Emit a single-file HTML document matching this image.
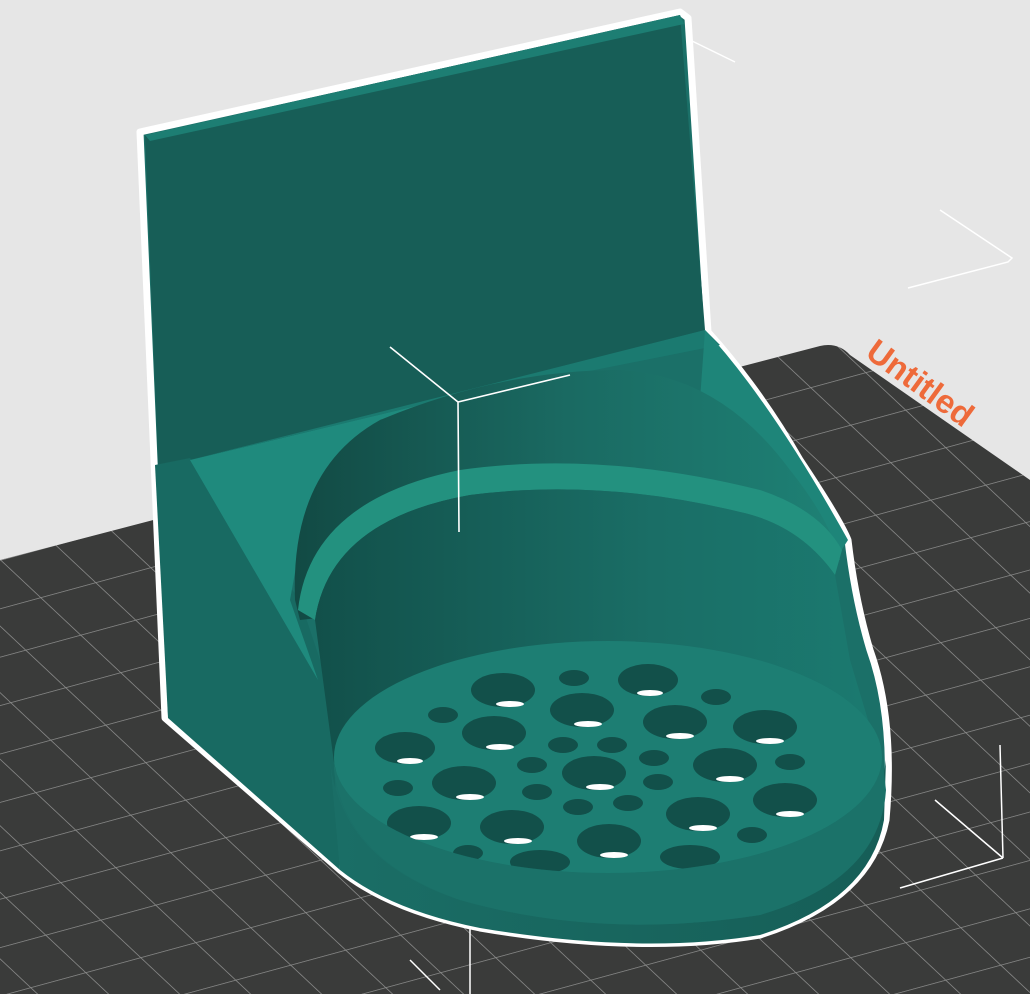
<!DOCTYPE html>
<html><head><meta charset="utf-8"><style>
html,body{margin:0;padding:0;width:1030px;height:994px;overflow:hidden;background:#e6e6e6}
svg{display:block}
</style></head><body>
<svg width="1030" height="994" viewBox="0 0 1030 994" xmlns="http://www.w3.org/2000/svg">
<defs>
<pattern id="grid" width="50" height="50" patternUnits="userSpaceOnUse" patternTransform="matrix(1.1,-0.3,0.8,0.75,0,560)">
<rect width="50" height="50" fill="#3a3b3a"/>
<path d="M0 0H50M0 0V50" stroke="#8a8a8a" stroke-width="1.6" fill="none"/>
</pattern>
<linearGradient id="cyl" x1="0" x2="1" y1="0" y2="0">
<stop offset="0" stop-color="#124a44"/><stop offset="0.5" stop-color="#1a6a62"/><stop offset="1" stop-color="#1e8175"/>
</linearGradient>
<linearGradient id="wall" x1="0" x2="1"><stop offset="0" stop-color="#12504a"/><stop offset="0.6" stop-color="#1a6e66"/><stop offset="1" stop-color="#1b7a70"/></linearGradient>
<linearGradient id="front" x1="0" x2="1"><stop offset="0" stop-color="#1a6e66"/><stop offset="1" stop-color="#165e57"/></linearGradient>
<clipPath id="floorclip"><ellipse cx="608" cy="757" rx="274" ry="116"/></clipPath>
</defs>
<path d="M0 560 L820 346 Q838 342 850 355 L1030 480 L1030 994 L0 994 Z" fill="url(#grid)"/>
<text x="0" y="0" transform="translate(864,356) rotate(36)" font-family="Liberation Sans, sans-serif" font-weight="bold" font-size="33" fill="#ee6a3a">Untitled</text>
<g stroke="#fff" stroke-width="1.5" fill="none">
<path d="M690 40 L735 62"/><path d="M940 210 L1012 258 L1008 262 L908 288"/>
<path d="M1000 745 L1003 858 M935 800 L1003 858 M900 888 L1003 858"/>
<path d="M410 960 L440 990 M470 902 L470 994"/>
<path d="M148 140 L202 186"/>
</g>
<path d="M140 132 L680 12 L688 18 L708 332 Q760 390 800 460 Q840 520 848 540 Q855 600 870 650 Q895 720 886 820 Q870 900 760 935 Q640 955 480 928 Q390 910 340 870 L165 718 Z" fill="#1b7068" stroke="#fff" stroke-width="7" stroke-linejoin="round"/>
<path d="M145 135 L680 15 L705 330 L190 462 L168 715 Z" fill="#175e57"/>
<path d="M145 135 L680 15 L684 24 L150 141 Z" fill="#1d7e73"/>
<path d="M155 465 L190 458 L300 600 L330 690 L340 870 L168 718 Z" fill="#186a62"/>
<path d="M190 460 L420 405 L300 545 L290 600 L318 680 Z" fill="#1f8a7d"/>
<path d="M190 460 L705 330 L720 345 L420 405 Z" fill="#1b7a70"/>
<path d="M705 330 Q770 400 848 540 L835 560 Q790 470 700 400 Z" fill="#1e8579"/>
<path d="M295 600 Q290 470 380 420 Q500 370 620 370 Q720 375 790 470 Q830 520 840 560 L300 620 Z" fill="url(#cyl)"/>
<path d="M298 610 Q310 500 460 470 Q600 450 760 490 Q820 510 842 550 L835 575 Q800 525 740 512 Q600 478 470 495 Q330 520 315 620 Z" fill="#23917f"/>
<path d="M315 620 Q330 520 470 495 Q600 478 740 512 Q800 525 835 575 L850 660 L880 760 L335 770 Z" fill="url(#wall)"/>
<path d="M330 760 Q340 860 460 900 Q600 940 760 915 Q870 880 886 760 L884 820 Q870 900 760 935 Q640 955 480 928 Q390 910 340 870 Z" fill="url(#front)"/>
<path d="M334 757 A274 116 0 0 0 882 757 L886 790 Q880 880 760 915 Q600 940 460 900 Q345 860 334 770 Z" fill="#1b7269"/>
<ellipse cx="608" cy="757" rx="274" ry="116" fill="#1d7e73"/>
<g clip-path="url(#floorclip)">
<g fill="#12504a">
<ellipse cx="503" cy="690" rx="32" ry="17"/><ellipse cx="574" cy="678" rx="15" ry="8"/><ellipse cx="648" cy="680" rx="30" ry="16"/><ellipse cx="716" cy="697" rx="15" ry="8"/><ellipse cx="443" cy="715" rx="15" ry="8"/><ellipse cx="582" cy="710" rx="32" ry="17"/><ellipse cx="675" cy="722" rx="32" ry="17"/><ellipse cx="765" cy="727" rx="32" ry="17"/><ellipse cx="494" cy="733" rx="32" ry="17"/><ellipse cx="405" cy="748" rx="30" ry="16"/><ellipse cx="563" cy="745" rx="15" ry="8"/><ellipse cx="612" cy="745" rx="15" ry="8"/><ellipse cx="654" cy="758" rx="15" ry="8"/><ellipse cx="532" cy="765" rx="15" ry="8"/><ellipse cx="594" cy="773" rx="32" ry="17"/><ellipse cx="725" cy="765" rx="32" ry="17"/><ellipse cx="790" cy="762" rx="15" ry="8"/><ellipse cx="398" cy="788" rx="15" ry="8"/><ellipse cx="464" cy="783" rx="32" ry="17"/><ellipse cx="537" cy="792" rx="15" ry="8"/><ellipse cx="628" cy="803" rx="15" ry="8"/><ellipse cx="658" cy="782" rx="15" ry="8"/><ellipse cx="578" cy="807" rx="15" ry="8"/><ellipse cx="785" cy="800" rx="32" ry="17"/><ellipse cx="419" cy="823" rx="32" ry="17"/><ellipse cx="512" cy="827" rx="32" ry="17"/><ellipse cx="698" cy="814" rx="32" ry="17"/><ellipse cx="752" cy="835" rx="15" ry="8"/><ellipse cx="609" cy="841" rx="32" ry="17"/><ellipse cx="468" cy="853" rx="15" ry="8"/><ellipse cx="540" cy="862" rx="30" ry="12"/><ellipse cx="690" cy="857" rx="30" ry="12"/>
</g>
<g fill="#fff">
<ellipse cx="510" cy="704" rx="14" ry="3"/><ellipse cx="650" cy="693" rx="13" ry="3"/><ellipse cx="588" cy="724" rx="14" ry="3"/><ellipse cx="680" cy="736" rx="14" ry="3"/><ellipse cx="770" cy="741" rx="14" ry="3"/><ellipse cx="500" cy="747" rx="14" ry="3"/><ellipse cx="410" cy="761" rx="13" ry="3"/><ellipse cx="600" cy="787" rx="14" ry="3"/><ellipse cx="730" cy="779" rx="14" ry="3"/><ellipse cx="470" cy="797" rx="14" ry="3"/><ellipse cx="790" cy="814" rx="14" ry="3"/><ellipse cx="424" cy="837" rx="14" ry="3"/><ellipse cx="518" cy="841" rx="14" ry="3"/><ellipse cx="703" cy="828" rx="14" ry="3"/><ellipse cx="614" cy="855" rx="14" ry="3"/>
</g>
</g>
<g stroke="#fff" stroke-width="1.6" fill="none">
<path d="M390 347 L458 402 L570 375 M458 402 L459 532"/>
</g>
</svg>
</body></html>
